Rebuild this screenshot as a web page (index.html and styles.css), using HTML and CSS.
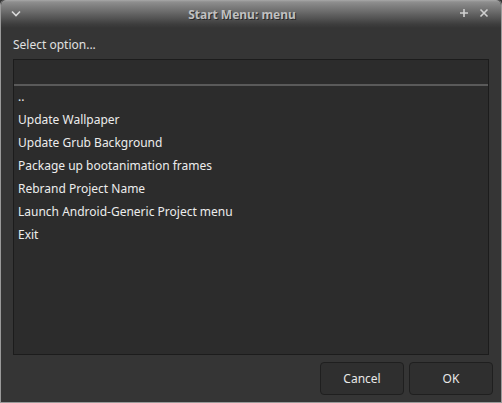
FILE: index.html
```html
<!DOCTYPE html>
<html>
<head>
<meta charset="utf-8">
<link rel="stylesheet" href="styles.css">
</head>
<body>
<div class="window">
  <div class="titlebar">
    <span class="tb-left">
      <svg width="10" height="7" viewBox="0 0 10 7"><path d="M1 1.5 L5 5.5 L9 1.5" fill="none" stroke="#d8d8d8" stroke-width="1.6"/></svg>
    </span>
    <span class="title">Start Menu: menu</span>
    <span class="tb-right">
      <svg width="10" height="10" viewBox="0 0 10 10"><path d="M5 1 V9 M1 5 H9" stroke="#d0d0d0" stroke-width="1.6"/></svg>
      <svg width="10" height="10" viewBox="0 0 10 10"><path d="M1.5 1.5 L8.5 8.5 M8.5 1.5 L1.5 8.5" stroke="#d0d0d0" stroke-width="1.6"/></svg>
    </span>
  </div>
  <div class="content">
    <div class="label">Select option...</div>
    <div class="listbox">
      <div class="input"></div>
      <ul class="items">
        <li>..</li>
        <li>Update Wallpaper</li>
        <li>Update Grub Background</li>
        <li>Package up bootanimation frames</li>
        <li>Rebrand Project Name</li>
        <li>Launch Android-Generic Project menu</li>
        <li>Exit</li>
      </ul>
    </div>
    <div class="buttons">
      <button class="btn">Cancel</button>
      <button class="btn">OK</button>
    </div>
  </div>
</div>
</body>
</html>
```
FILE: styles.css
```css
html, body {
  margin: 0;
  padding: 0;
  background: #353535;
}
body {
  width: 502px;
  height: 403px;
  overflow: hidden;
  font-family: "Noto Sans", "Open Sans", sans-serif;
  font-size: 12px;
  color: #e4e4e4;
}
.window {
  box-sizing: border-box;
  width: 502px;
  height: 403px;
  border: 1px solid #9a9a9a;
  border-top: none;
  border-radius: 5px 5px 0 0;
  background: #353535;
  display: flex;
  flex-direction: column;
  overflow: hidden;
}
.titlebar {
  height: 28px;
  flex: none;
  display: flex;
  align-items: center;
  background: linear-gradient(to bottom, #a8a8a8 0px, #8e8e8e 2px, #6a6a6a 12px, #3e3e3e 24px, #353535 28px);
  border-radius: 5px 5px 0 0;
}
.tb-left {
  width: 30px;
  padding-left: 10px;
  display: flex;
  align-items: center;
  margin-top: -2px;
}
.title {
  flex: 1;
  text-align: center;
  font-family: "Noto Sans", sans-serif;
  font-weight: bold;
  font-size: 12px;
  color: #c0c0c0;
  text-shadow: 1px 1px 0 #2a2a2a;
  padding-right: 16px;
}
.tb-right {
  display: flex;
  gap: 10px;
  padding-right: 12px;
  margin-top: -2px;
}
.content {
  flex: 1;
  display: flex;
  flex-direction: column;
  padding: 7px 12px 8px 12px;
}
.label {
  height: 24px;
  line-height: 20px;
  color: #e0e0e0;
}
.listbox {
  width: 476px;
  height: 296px;
  box-sizing: border-box;
  border: 1px solid #1c1c1c;
  background: #2c2c2c;
}
.input {
  height: 24px;
  border-bottom: 2px solid #5a5a5a;
}
.items {
  list-style: none;
  margin: -1px 0 0 0;
  padding: 0 0 0 4px;
}
.items li {
  height: 23px;
  line-height: 23px;
  color: #ececec;
}
.buttons {
  display: flex;
  justify-content: flex-end;
  gap: 5px;
  margin-top: 7px;
  margin-right: -4px;
}
.btn {
  width: 84px;
  height: 33px;
  box-sizing: border-box;
  border: 1px solid #1f1f1f;
  border-radius: 4px;
  background: #2f2f2f;
  color: #e8e8e8;
  font-family: "Noto Sans", "Open Sans", sans-serif;
  font-size: 12px;
  padding: 0;
}
```
